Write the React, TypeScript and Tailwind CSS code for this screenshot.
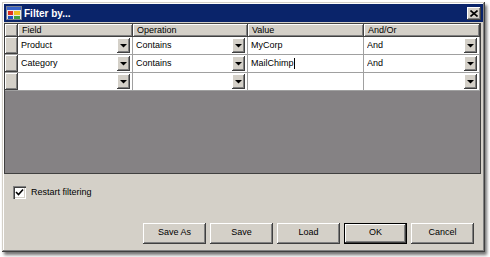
import React from "react";

const raised =
  "bg-[#d4d0c8] shadow-[inset_-1px_-1px_#404040,inset_1px_1px_#ffffff,inset_-2px_-2px_#808080,inset_2px_2px_#d4d0c8]";

function DropBtn() {
  return (
    <div className={`w-[13px] h-[15px] flex items-center justify-center ${raised}`}>
      <svg width="7" height="5" viewBox="0 0 7 5">
        <path d="M0 1h7L3.5 4.5z" fill="#000" />
      </svg>
    </div>
  );
}

function Cell({ w, text, drop, cursor }: { w: string; text?: string; drop?: boolean; cursor?: boolean }) {
  return (
    <div className={`${w} h-full bg-white border-r border-[#a0a0a0] flex items-center pl-[3px] pr-[2px]`}>
      <span className="flex-1 truncate flex items-center">
        {text}
        {cursor && <span className="inline-block w-[1px] h-[11px] bg-black" />}
      </span>
      {drop && <DropBtn />}
    </div>
  );
}

function Row({ a, b, c, d, cursor }: { a?: string; b?: string; c?: string; d?: string; cursor?: boolean }) {
  return (
    <div className="flex h-[18px] border-b border-[#a0a0a0]">
      <div className={`w-[13px] h-full ${raised}`} />
      <Cell w="w-[115px]" text={a} drop />
      <Cell w="w-[115px]" text={b} drop />
      <Cell w="w-[116px]" text={c} cursor={cursor} />
      <Cell w="w-[116px]" text={d} drop />
    </div>
  );
}

function Head({ w, t }: { w: string; t?: string }) {
  return (
    <div className={`${w} h-full flex items-center pl-[4px] ${raised}`}>{t}</div>
  );
}

function Btn({ t, def }: { t: string; def?: boolean }) {
  return (
    <div
      className={`w-[63px] h-[21px] flex items-center justify-center ${
        def
          ? "bg-[#d4d0c8] border border-black shadow-[inset_-1px_-1px_#404040,inset_1px_1px_#ffffff,inset_-2px_-2px_#808080]"
          : raised
      }`}
    >
      {t}
    </div>
  );
}

export default function App() {
  return (
    <div
      className="w-[490px] h-[257px] bg-white overflow-hidden text-[9px] text-black"
      style={{ fontFamily: '"Liberation Sans", Arial, sans-serif' }}
    >
      <div className="ml-[2px] mt-[2px] w-[483px] h-[250px] bg-[#d4d0c8] shadow-[inset_-1px_-1px_#404040,inset_1px_1px_#d4d0c8,inset_-2px_-2px_#808080,inset_2px_2px_#ffffff,2px_3px_3px_rgba(0,0,0,0.55)] p-[2px] flex flex-col">
        {/* title bar */}
        <div className="h-[18px] bg-[#0a246a] flex items-center pl-[2px] pr-[2px]">
          <svg width="16" height="14" viewBox="0 0 16 14" className="mr-[2px]">
            <rect x="0.5" y="0.5" width="15" height="13" fill="#e8e8e8" stroke="#7a8090" />
            <rect x="1" y="1" width="14" height="3" fill="#3a64c8" />
            <rect x="2" y="5" width="5" height="4" fill="#e03020" />
            <rect x="8" y="5" width="6" height="4" fill="#f0c020" />
            <rect x="2" y="10" width="5" height="3" fill="#2050c0" />
            <rect x="8" y="10" width="6" height="3" fill="#40a040" />
          </svg>
          <span className="text-white font-bold text-[10px] flex-1">Filter by...</span>
          <div className={`w-[14px] h-[13px] flex items-center justify-center ${raised}`}>
            <svg width="8" height="7" viewBox="0 0 8 7">
              <path d="M0.5 0.5L7.5 6.5M7.5 0.5L0.5 6.5" stroke="#000" strokeWidth="1.6" />
            </svg>
          </div>
        </div>

        {/* grid */}
        <div className="mt-[1px] w-[477px] h-[151px] border border-[#404040] bg-[#858284] flex flex-col">
          <div className="flex h-[13px]">
            <Head w="w-[13px]" />
            <Head w="w-[115px]" t="Field" />
            <Head w="w-[115px]" t="Operation" />
            <Head w="w-[116px]" t="Value" />
            <Head w="w-[116px]" t="And/Or" />
          </div>
          <Row a="Product" b="Contains" c="MyCorp" d="And" />
          <Row a="Category" b="Contains" c="MailChimp" d="And" cursor />
          <Row />
        </div>

        {/* checkbox */}
        <div className="flex items-center mt-[12px] ml-[9px]">
          <div className="w-[13px] h-[13px] bg-white shadow-[inset_1px_1px_#808080,inset_2px_2px_#404040,inset_-1px_-1px_#ffffff,inset_-2px_-2px_#d4d0c8] flex items-center justify-center">
            <svg width="9" height="9" viewBox="0 0 9 9">
              <path d="M1 4L3.5 6.5L8 1.5" stroke="#000" strokeWidth="1.6" fill="none" />
            </svg>
          </div>
          <span className="ml-[5px]">Restart filtering</span>
        </div>

        {/* buttons */}
        <div className="flex justify-end gap-[4px] mt-[23px] mr-[9px]">
          <Btn t="Save As" />
          <Btn t="Save" />
          <Btn t="Load" />
          <Btn t="OK" def />
          <Btn t="Cancel" />
        </div>
      </div>
    </div>
  );
}
